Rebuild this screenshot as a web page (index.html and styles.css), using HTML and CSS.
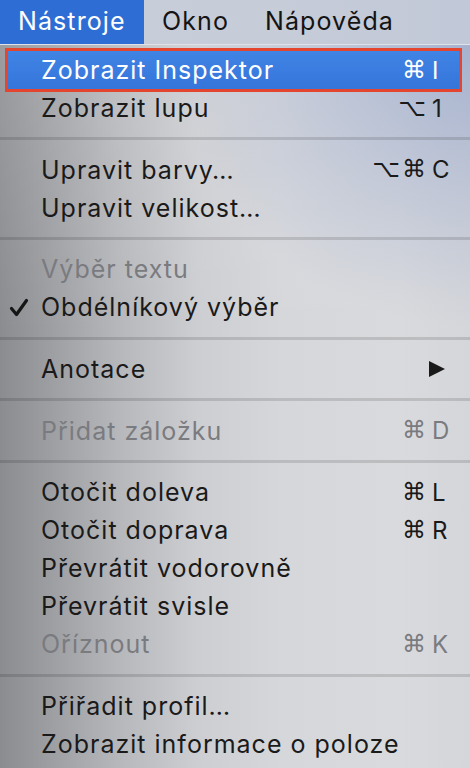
FILE: index.html
```html
<!DOCTYPE html>
<html lang="cs">
<head>
<meta charset="utf-8">
<title>Nástroje</title>
<link rel="stylesheet" href="styles.css">
</head>
<body>
<div class="screen">
  <div class="menubar">
    <div class="mb-item active">Nástroje</div>
    <div class="mb-item">Okno</div>
    <div class="mb-item">Nápověda</div>
  </div>
  <div class="menu">
    <div class="item hl"><span class="label">Zobrazit Inspektor</span><span class="sc"><span class="mods">⌘</span><span class="key">I</span></span></div>
    <div class="item"><span class="label">Zobrazit lupu</span><span class="sc"><span class="mods">⌥</span><span class="key">1</span></span></div>
    <div class="sep"></div>
    <div class="item"><span class="label">Upravit barvy…</span><span class="sc"><span class="mods">⌥⌘</span><span class="key">C</span></span></div>
    <div class="item"><span class="label">Upravit velikost…</span></div>
    <div class="sep"></div>
    <div class="item dis"><span class="label">Výběr textu</span></div>
    <div class="item"><span class="check"><svg width="20" height="20" viewBox="0 0 20 20"><path d="M2.5 10.5 L7.5 16.5 L17.5 2.5" fill="none" stroke="#151515" stroke-width="3.2" stroke-linecap="round" stroke-linejoin="round"/></svg></span><span class="label">Obdélníkový výběr</span></div>
    <div class="sep"></div>
    <div class="item"><span class="label">Anotace</span><span class="arrow"><svg width="18" height="18" viewBox="0 0 18 18"><path d="M1 1 L17 9 L1 17 Z" fill="#1a1a1a"/></svg></span></div>
    <div class="sep"></div>
    <div class="item dis"><span class="label">Přidat záložku</span><span class="sc"><span class="mods">⌘</span><span class="key">D</span></span></div>
    <div class="sep"></div>
    <div class="item"><span class="label">Otočit doleva</span><span class="sc"><span class="mods">⌘</span><span class="key">L</span></span></div>
    <div class="item"><span class="label">Otočit doprava</span><span class="sc"><span class="mods">⌘</span><span class="key">R</span></span></div>
    <div class="item"><span class="label">Převrátit vodorovně</span></div>
    <div class="item"><span class="label">Převrátit svisle</span></div>
    <div class="item dis"><span class="label">Oříznout</span><span class="sc"><span class="mods">⌘</span><span class="key">K</span></span></div>
    <div class="sep"></div>
    <div class="item"><span class="label">Přiřadit profil…</span></div>
    <div class="item"><span class="label">Zobrazit informace o poloze</span></div>
  </div>
</div>
</body>
</html>
```
FILE: styles.css
```css
html, body {
  margin: 0;
  padding: 0;
}
body {
  width: 470px;
  height: 768px;
  overflow: hidden;
  font-family: Inter, "DejaVu Sans", sans-serif;
  font-size: 25px;
  color: #1a1a1a;
}
.screen {
  display: flex;
  flex-direction: column;
  height: 768px;
}
.menubar {
  display: flex;
  height: 44px;
  background: linear-gradient(90deg, #c9cfd9, #c6ccd8 60%, #c1c8d7);
  border-bottom: 1px solid #dfe2e8;
  flex: none;
}
.mb-item {
  display: flex;
  align-items: center;
  padding: 0 18px 2px;
  color: #141414;
  letter-spacing: 1.1px;
}
.mb-item.active {
  background: #2e6ed4;
  color: #ffffff;
  width: 144px;
  box-sizing: border-box;
}
.menu {
  flex: 1;
  padding-top: 6px;
  background:
    radial-gradient(ellipse 300px 280px at 100% 0%, rgba(130, 150, 195, 0.6), rgba(130, 150, 195, 0) 100%),
    linear-gradient(180deg, rgba(255, 255, 255, 0.14), rgba(255, 255, 255, 0) 40%),
    linear-gradient(90deg, #8b8c90 0%, #9c9da1 10%, #b6b7bb 25%, #cdced2 42%, #d6d7db 60%, #d9dadd 85%, #d5d6da 100%);
}
.item {
  display: grid;
  grid-template-columns: 41px 1fr auto;
  align-items: center;
  height: 38px;
  padding-right: 18px;
  box-sizing: border-box;
}
.item .label {
  grid-column: 2;
  white-space: nowrap;
  letter-spacing: 1px;
}
.item .check {
  grid-column: 1;
  display: flex;
  justify-content: flex-start;
  padding-left: 9px;
  padding-top: 2px;
}
.item .sc {
  grid-column: 3;
  display: flex;
  font-family: "DejaVu Sans", Inter, sans-serif;
  font-size: 24px;
}
.sc .mods {
  text-align: right;
  letter-spacing: 2px;
}
.sc .key {
  width: 20px;
  padding-left: 4px;
  font-family: Inter, "DejaVu Sans", sans-serif;
}
.item .arrow {
  grid-column: 3;
  display: flex;
  padding-right: 6px;
}
.item.dis {
  color: #7a7b7f;
}
.item.hl {
  margin: 0 11px 0 8px;
  grid-template-columns: 33px 1fr auto;
  padding-right: 7px;
  background: linear-gradient(180deg, #3f84e4, #3675db);
  color: #ffffff;
  outline: 3px solid #e3452f;
}
.sep {
  height: 23.67px;
  display: flex;
  align-items: center;
}
.sep::before {
  content: "";
  display: block;
  width: 100%;
  height: 3px;
  background: rgba(0, 0, 0, 0.13);
}
```
